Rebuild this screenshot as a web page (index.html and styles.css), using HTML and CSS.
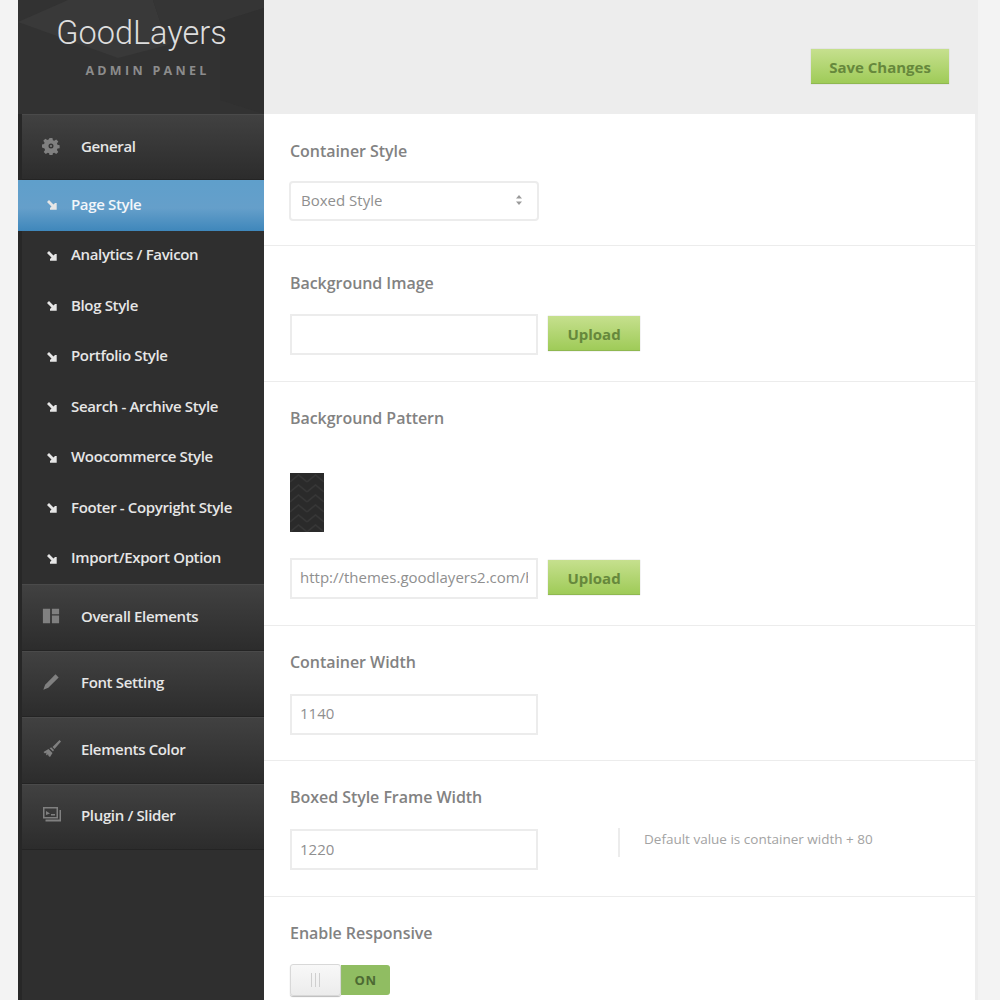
FILE: index.html
```html
<!DOCTYPE html>
<html lang="en">

<head>
  <meta charset="UTF-8" />
  <title>GoodLayers Admin Panel</title>
  <link rel="stylesheet" href="styles.css">
</head>

<body>
  <div class="wrapper">
    <div class="sidebar">
      <div class="logo">
        <svg class="logo-facets" viewBox="0 0 246 114" width="246" height="114">
          <polygon points="0,22 50,0 135,0 150,45 100,58" fill="#393939" />
          <polygon points="135,0 246,0 246,8 202,22 150,45" fill="#353535" />
          <polygon points="202,22 246,8 246,114 202,100" fill="#303030" />
        </svg>
        <div class="logo-title">GoodLayers</div>
        <div class="logo-sub">ADMIN PANEL</div>
      </div>

      <div class="nav-main nav-general">
        <svg class="nav-icon" viewBox="0 0 20 20" width="18" height="18">
          <path fill-rule="evenodd" d="M8.400 1h3.200l.5 2.600 1.500.6 2.200-1.500 2.300 2.300-1.500 2.200.6 1.500 2.400.5v3.200l-2.400.5-.6 1.500 1.500 2.200-2.300 2.300-2.200-1.500-1.500.6-.5 2.600H8.400l-.5-2.600-1.500-.6-2.200 1.500-2.300-2.300 1.500-2.200-.6-1.500L0 11.600V8.400l2.300-.5.6-1.500-1.500-2.200 2.300-2.300 2.200 1.500 1.500-.6zM10 7.200a2.800 2.800 0 1 0 0 5.600 2.800 2.800 0 0 0 0-5.600z" />
          <circle cx="10" cy="10" r="1.200" />
        </svg>
        <span>General</span>
      </div>

      <a class="nav-sub active"><svg class="arrow" viewBox="0 0 10 10" width="10" height="10"><path d="M2 0l4.500 4.500L8 3h1.700v6.700H3V8l1.500-1.500L0 2z" /></svg><span>Page Style</span></a>
      <a class="nav-sub"><svg class="arrow" viewBox="0 0 10 10" width="10" height="10"><path d="M2 0l4.500 4.500L8 3h1.700v6.700H3V8l1.500-1.500L0 2z" /></svg><span>Analytics / Favicon</span></a>
      <a class="nav-sub"><svg class="arrow" viewBox="0 0 10 10" width="10" height="10"><path d="M2 0l4.500 4.500L8 3h1.700v6.700H3V8l1.500-1.500L0 2z" /></svg><span>Blog Style</span></a>
      <a class="nav-sub"><svg class="arrow" viewBox="0 0 10 10" width="10" height="10"><path d="M2 0l4.500 4.500L8 3h1.700v6.700H3V8l1.500-1.500L0 2z" /></svg><span>Portfolio Style</span></a>
      <a class="nav-sub"><svg class="arrow" viewBox="0 0 10 10" width="10" height="10"><path d="M2 0l4.500 4.500L8 3h1.700v6.700H3V8l1.500-1.500L0 2z" /></svg><span>Search - Archive Style</span></a>
      <a class="nav-sub"><svg class="arrow" viewBox="0 0 10 10" width="10" height="10"><path d="M2 0l4.500 4.500L8 3h1.700v6.700H3V8l1.500-1.500L0 2z" /></svg><span>Woocommerce Style</span></a>
      <a class="nav-sub"><svg class="arrow" viewBox="0 0 10 10" width="10" height="10"><path d="M2 0l4.500 4.500L8 3h1.700v6.700H3V8l1.500-1.500L0 2z" /></svg><span>Footer - Copyright Style</span></a>
      <a class="nav-sub"><svg class="arrow" viewBox="0 0 10 10" width="10" height="10"><path d="M2 0l4.500 4.500L8 3h1.700v6.700H3V8l1.500-1.500L0 2z" /></svg><span>Import/Export Option</span></a>

      <div class="nav-main">
        <svg class="nav-icon" viewBox="0 0 20 20" width="18" height="18">
          <path d="M1 2h8v16H1zM11 2h8v6h-8zM11 9.500h8V18h-8z" />
        </svg>
        <span>Overall Elements</span>
      </div>
      <div class="nav-main">
        <svg class="nav-icon" viewBox="0 0 20 20" width="18" height="18">
          <path d="M15 1.500l3.500 3.500L7 16.500l-5.500 2 2-5.500z" />
        </svg>
        <span>Font Setting</span>
      </div>
      <div class="nav-main">
        <svg class="nav-icon" viewBox="0 0 20 20" width="20" height="20">
          <path d="M17.500 1l1.500 1.500-6.500 7.500-2-2zM9.500 8.500l2.500 2.500-1 1.500-3.500-3.500zM6.500 10l4 4-2.500 4-1.500-1-.5-2-1 1.500-1-1 .5-2-1.500 1-1.500-1.500z" />
        </svg>
        <span class="after-wide">Elements Color</span>
      </div>
      <div class="nav-main">
        <svg class="nav-icon" viewBox="0 0 20 20" width="20" height="20">
          <path fill-rule="evenodd" d="M1 2h15v11.500H1zM2.500 3.500V12h12V3.500z" />
          <path d="M3.500 14.500h14V5H19v11.500H3.500zM4 6l4 2.500-4 1.500zM9 9h4v1.500H9z" />
        </svg>
        <span class="after-wide">Plugin / Slider</span>
      </div>
    </div>

    <div class="main">
      <div class="topbar">
        <button class="btn btn-save">Save Changes</button>
      </div>

      <div class="content">
        <div class="option option-first">
          <div class="option-title">Container Style</div>
          <div class="select-box">
            <span class="field-value">Boxed Style</span>
            <svg viewBox="0 0 8 12" width="8" height="12">
              <path d="M4 1l3 3.500H1zM4 11L1 7.500h6z" />
            </svg>
          </div>
        </div>

        <div class="option option-second">
          <div class="option-title">Background Image</div>
          <div class="field-row">
            <div class="text-box"></div>
            <button class="btn btn-upload">Upload</button>
          </div>
        </div>

        <div class="option option-pattern">
          <div class="option-title">Background Pattern</div>
          <svg class="swatch" width="34" height="59">
            <defs>
              <pattern id="chevrons" width="17" height="10" patternUnits="userSpaceOnUse">
                <path d="M0 9l8.500-7 8.500 7" fill="none" stroke="#363636" stroke-width="1.500" />
              </pattern>
            </defs>
            <rect width="34" height="59" fill="#2a2a2a" />
            <rect width="34" height="59" fill="url(#chevrons)" />
          </svg>
          <div class="field-row">
            <div class="text-box"><span class="field-value">http://themes.goodlayers2.com/h</span></div>
            <button class="btn btn-upload">Upload</button>
          </div>
        </div>

        <div class="option">
          <div class="option-title">Container Width</div>
          <div class="field-row">
            <div class="text-box"><span class="field-value">1140</span></div>
          </div>
        </div>

        <div class="option">
          <div class="option-title">Boxed Style Frame Width</div>
          <div class="field-row">
            <div class="text-box"><span class="field-value">1220</span></div>
            <div class="hint">Default value is container width + 80</div>
          </div>
        </div>

        <div class="option option-last">
          <div class="option-title">Enable Responsive</div>
          <div class="toggle">
            <div class="toggle-knob"><span></span></div>
            <div class="toggle-on">ON</div>
          </div>
        </div>
      </div>
    </div>
  </div>
</body>

</html>
```

FILE: styles.css
```css
* {
  margin: 0;
  padding: 0;
  box-sizing: border-box;
  font-family: 'Open Sans', sans-serif;
}

html,
body {
  height: 100%;
  overflow: hidden;
}

body {
  background: #f3f3f3;
}

.wrapper {
  display: flex;
  width: 960px;
  height: 1000px;
  margin-left: 18px;
  overflow: hidden;
}

/* sidebar */
.sidebar {
  width: 246px;
  flex: none;
  background: #2f2f2f;
  border-left: 4px solid #272727;
  z-index: 1;
}

.logo {
  position: relative;
  height: 114px;
  margin-left: -4px;
  background: #323232;
  overflow: hidden;
  text-align: center;
  padding: 11px 0 0 0;
}

.logo-facets {
  position: absolute;
  left: 0;
  top: 0;
}

.logo-title,
.logo-sub {
  position: relative;
}

.logo-title {
  font-family: Roboto, sans-serif;
  font-weight: 300;
  font-size: 32.500px;
  line-height: 44px;
  color: #dedede;
  margin-left: 1px;
}

.logo-sub {
  font-size: 12.500px;
  font-weight: 700;
  letter-spacing: 3.300px;
  line-height: 16px;
  color: #8c8c8c;
  margin-top: 8px;
  margin-left: 13px;
}

.nav-main {
  display: flex;
  align-items: center;
  height: 66.500px;
  padding: 0 0 3px 20px;
  font-size: 15px;
  font-weight: 600;
  letter-spacing: -0.350px;
  color: #e6e6e6;
  background: linear-gradient(#414141, #2c2c2c);
  border-top: 1px solid #4a4a4a;
  border-bottom: 1px solid #242424;
}

.nav-general {
  height: 66px;
}

.nav-icon {
  fill: #808080;
  margin-right: 21px;
  flex: none;
}

.nav-icon + .after-wide {
  margin-left: -2px;
}

.nav-sub {
  display: flex;
  align-items: center;
  height: 50.500px;
  padding: 0 0 3px 25px;
  font-size: 15px;
  font-weight: 600;
  letter-spacing: -0.350px;
  color: #e6e6e6;
}

.nav-sub .arrow {
  fill: #e6e6e6;
  margin-right: 14px;
  margin-top: 3px;
  flex: none;
}

.nav-sub.active {
  margin-left: -4px;
  padding-left: 29px;
  color: #f2f6fa;
  background: linear-gradient(#5f9fcb 0, #659fca 55%, #3f87bb 100%);
}

/* right side */
.main {
  flex: 1;
  min-width: 0;
  background: #eeeeee;
}

.topbar {
  display: flex;
  justify-content: flex-end;
  align-items: flex-start;
  height: 114px;
  padding: 49px 29px 0 0;
  background: #ededed;
}

.content {
  background: #fff;
  margin-right: 3px;
  height: 886px;
}

.option {
  height: 135.500px;
  padding: 25px 0 0 26px;
  border-bottom: 1px solid #ececec;
}

.option-first {
  height: 132px;
  padding-top: 26px;
}

.option-second {
  padding-top: 26px;
}

.option-pattern {
  height: 244px;
}

.option-title {
  font-size: 16px;
  font-weight: 600;
  line-height: 22px;
  letter-spacing: -0.050px;
  color: #828282;
  margin-bottom: 21px;
}

.option-first .option-title {
  margin-bottom: 19px;
}

.option-second .option-title {
  margin-bottom: 20px;
}

.option-pattern .option-title {
  margin-bottom: 0;
}

.option-last .option-title {
  margin-bottom: 20px;
}

.btn {
  border: none;
  font-family: 'Open Sans', sans-serif;
  font-size: 15px;
  font-weight: 700;
  padding-top: 2px;
  color: #66883c;
  background: linear-gradient(#c6e08e, #9fcb58);
  border-bottom: 1px solid #8fb850;
  box-shadow: 0 0 1px #b5b5b5;
}

.btn-save {
  width: 138px;
  height: 35px;
}

.btn-upload {
  width: 92px;
  height: 35px;
  margin: 2px 0 0 10px;
}

.select-box,
.text-box {
  display: flex;
  align-items: center;
  width: 248px;
  height: 41px;
  padding: 0 8px 2px 8px;
  font-size: 15px;
  color: #8f8f8f;
  background: #fff;
  border: 2px solid #ececec;
  white-space: nowrap;
}

.field-value {
  overflow: hidden;
  min-width: 0;
}

.select-box {
  justify-content: space-between;
  width: 250px;
  height: 40px;
  padding: 0 14px 2px 10px;
  margin-left: -1px;
  border-radius: 4px;
}

.select-box svg {
  fill: #9a9a9a;
}

.field-row {
  display: flex;
  align-items: flex-start;
}

.swatch {
  display: block;
  margin: 44px 0 26px;
}

.hint {
  margin: -1px 0 0 80px;
  height: 29px;
  padding: 2px 0 0 24px;
  border-left: 2px solid #ececec;
  font-size: 13.500px;
  line-height: 18px;
  color: #a3a3a3;
}

.toggle {
  display: flex;
  width: 100px;
  height: 32px;
}

.toggle-knob {
  display: flex;
  align-items: center;
  justify-content: center;
  width: 51px;
  background: linear-gradient(#f8f8f8, #ececec);
  border: 1px solid #d8d8d8;
  border-radius: 3px;
  box-shadow: 0 1px 1px #bbb;
  z-index: 1;
}

.toggle-knob span {
  width: 9px;
  height: 14px;
  border-left: 1px solid #cfcfcf;
  border-right: 1px solid #cfcfcf;
  background: linear-gradient(90deg, transparent 3px, #cfcfcf 3px, #cfcfcf 4px, transparent 4px);
}

.toggle-on {
  display: flex;
  align-items: center;
  justify-content: center;
  width: 49px;
  height: 30px;
  margin-top: 1px;
  font-size: 13px;
  font-weight: 700;
  letter-spacing: 0.500px;
  color: #4d6a33;
  background: #90bd62;
  border-radius: 0 3px 3px 0;
}
```
